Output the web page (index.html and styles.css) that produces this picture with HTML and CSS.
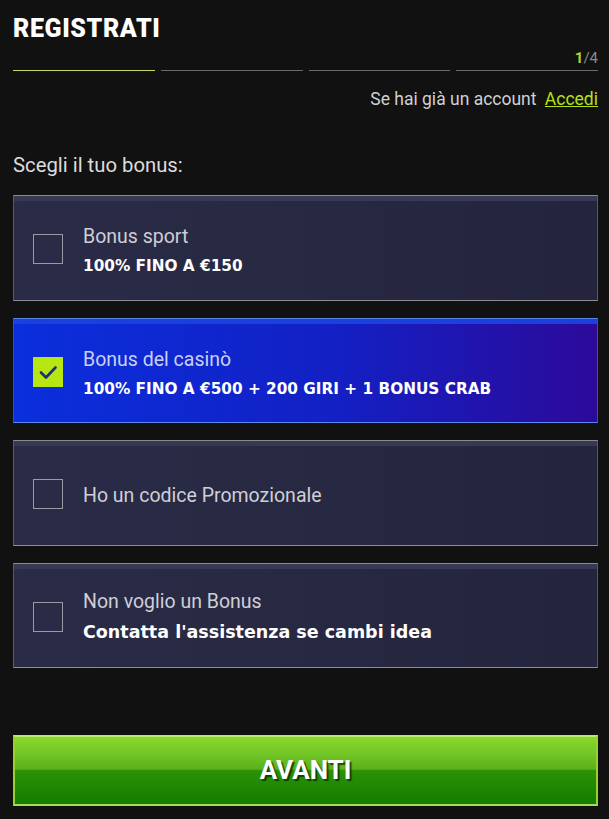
FILE: index.html
```html
<!DOCTYPE html>
<html lang="it">
<head>
<meta charset="utf-8">
<title>Registrati</title>
<link rel="stylesheet" href="styles.css">
</head>
<body>
<div class="page">
  <h1 class="title">REGISTRATI</h1>
  <div class="steps">
    <div class="step-count"><span class="cur">1</span>/4</div>
    <div class="bars">
      <span class="bar active"></span>
      <span class="bar"></span>
      <span class="bar"></span>
      <span class="bar"></span>
    </div>
  </div>
  <div class="login">Se hai già un account <a href="#" class="login-link">Accedi</a></div>
  <div class="label">Scegli il tuo bonus:</div>

  <div class="cards">
    <div class="card">
      <span class="check"></span>
      <div class="card-text">
        <div class="card-title">Bonus sport</div>
        <div class="card-sub">100% FINO A €150</div>
      </div>
    </div>
    <div class="card selected">
      <span class="check on">
        <svg viewBox="0 0 30 30" width="30" height="30"><path d="M8 15.5 L13 20.5 L22.5 10.5" fill="none" stroke="#1d2f7a" stroke-width="2.6" stroke-linecap="round" stroke-linejoin="round"/></svg>
      </span>
      <div class="card-text">
        <div class="card-title">Bonus del casinò</div>
        <div class="card-sub">100% FINO A €500 + 200 GIRI + 1 BONUS CRAB</div>
      </div>
    </div>
    <div class="card">
      <span class="check"></span>
      <div class="card-text">
        <div class="card-title">Ho un codice Promozionale</div>
      </div>
    </div>
    <div class="card">
      <span class="check"></span>
      <div class="card-text last">
        <div class="card-title">Non voglio un Bonus</div>
        <div class="card-sub big">Contatta l'assistenza se cambi idea</div>
      </div>
    </div>
  </div>

  <button class="next">AVANTI</button>
</div>
</body>
</html>
```

FILE: styles.css
```css
html, body {
  margin: 0;
  padding: 0;
  background: #111111;
}
body {
  font-family: Roboto, "Liberation Sans", Arial, sans-serif;
  color: #ffffff;
}
.page {
  padding: 0 11px 0 13px;
}
.title {
  margin: 0;
  padding-top: 15px;
  font-size: 25px;
  line-height: 28px;
  font-weight: 900;
  letter-spacing: 0.6px;
  color: #ffffff;
}
.steps {
  margin-top: 7px;
}
.step-count {
  text-align: right;
  font-size: 15px;
  line-height: 16px;
  color: #8a8a8a;
}
.step-count .cur {
  color: #b5d334;
  font-weight: 700;
}
.bars {
  margin-top: 4px;
  display: flex;
  gap: 6px;
}
.bar {
  flex: 1;
  height: 1px;
  background: #6a6a6a;
}
.bar.active {
  background: #c2dc6a;
}
.login {
  margin-top: 18px;
  text-align: right;
  font-size: 17.5px;
  line-height: 20px;
  color: #d0d0d0;
}
.login-link {
  margin-left: 4px;
  color: #b5e018;
  text-decoration: underline;
}
.label {
  margin-top: 44px;
  font-size: 20.3px;
  line-height: 24px;
  color: #dcdcdc;
}
.cards {
  margin-top: 18px;
  display: flex;
  flex-direction: column;
  gap: 17px;
}
.card {
  height: 105.5px;
  box-sizing: border-box;
  display: flex;
  align-items: center;
  padding: 3px 0 0 19px;
  border: 1px solid #5a5a62;
  border-top-color: #8a8a92;
  border-bottom-color: #8c8c94;
  background: linear-gradient(90deg, #2a2b47 0%, #272841 50%, #24253d 100%);
  box-shadow: inset 0 5px 0 #373851;
}
.card.selected {
  border-color: #3b4ea8;
  border-top-color: #5a88e8;
  border-bottom-color: #5a88e8;
  background: linear-gradient(90deg, #0a2fdc 0%, #1320c4 55%, #2c0a9a 100%);
  box-shadow: inset 0 5px 0 #1a40de;
}
.check {
  flex: none;
  width: 30px;
  height: 30px;
  box-sizing: border-box;
  border: 1px solid #9a9aa2;
}
.check.on {
  border: none;
  background: #b8e612;
}
.check svg {
  display: block;
}
.card-text {
  margin-left: 20px;
  padding-top: 4px;
}
.card-text.last {
  padding-top: 0;
}
.card-title {
  font-size: 19.5px;
  line-height: 22px;
  color: #cfcfd6;
}
.selected .card-title {
  color: #c8d0f4;
}
.card-sub {
  margin-top: 9px;
  font-family: "DejaVu Sans", Verdana, sans-serif;
  font-weight: 700;
  font-size: 15.3px;
  line-height: 19px;
  color: #ffffff;
}
.card-sub.big {
  margin-top: 8px;
  font-size: 17.5px;
  line-height: 22px;
}
.next {
  display: block;
  width: 100%;
  margin-top: 67px;
  height: 71px;
  box-sizing: border-box;
  border: 2px solid #9ad02c;
  border-top-color: #b8ea6a;
  border-bottom-color: #a8dc58;
  background: linear-gradient(180deg, #8ad830 0%, #72c626 25%, #5cb01a 48%, #2c9206 50%, #1f8702 75%, #147c00 100%);
  font-family: Roboto, "Liberation Sans", Arial, sans-serif;
  font-weight: 700;
  font-size: 26px;
  padding-bottom: 2px;
  color: #ffffff;
  text-shadow: 2px 2px 1px rgba(0, 40, 0, 0.75);
  cursor: pointer;
}
```
